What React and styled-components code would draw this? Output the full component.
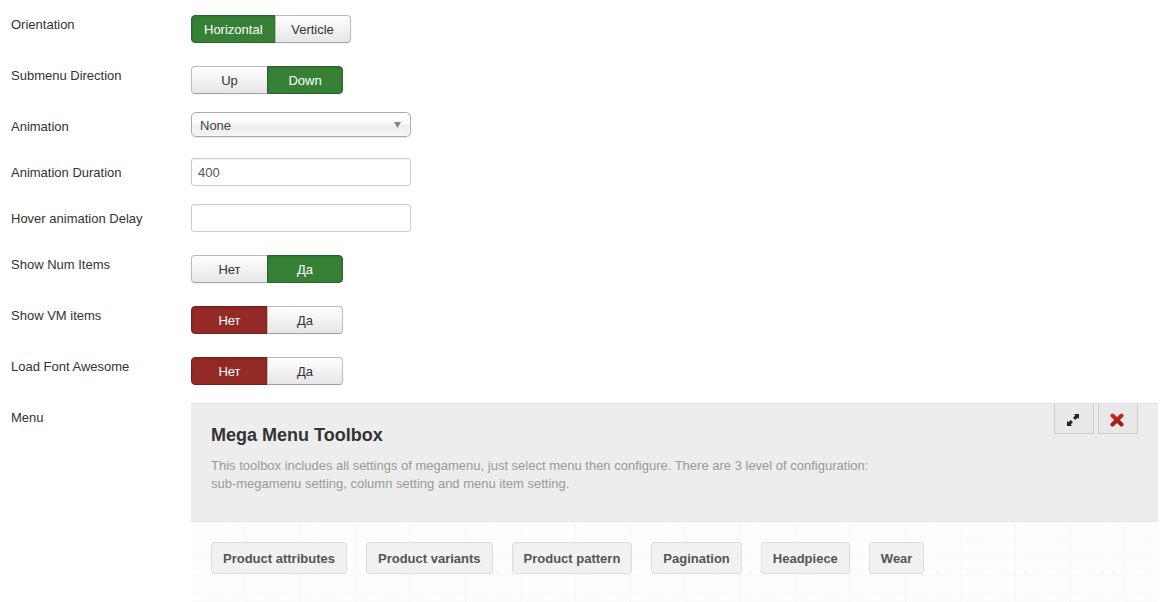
import React, { useState } from "react";
import styled, { createGlobalStyle } from "styled-components";

const GlobalStyle = createGlobalStyle`
    *, *::before, *::after {
        box-sizing: border-box;
    }
    body {
        background-color: #fff;
        color: #333;
        font-family: "Liberation Sans", Arial, sans-serif;
        font-size: 13px;
        line-height: 18px;
        margin: 0;
    }
    button, input, select {
        font: inherit;
        margin: 0;
    }
`

const Form = styled.form`
    display: flex;
    flex-direction: column;
    gap: 18px;
    padding: 10px 7px 0 11px;
`
const Row = styled.div`
    align-items: start;
    display: grid;
    grid-template-columns: 180px minmax(0, 1fr);
`
const RowLabel = styled.label`
    padding-top: 6px;
`
const Group = styled.div`
    display: flex;
    padding-top: 5px;
`
const colors = {
    green: { fill: "#378137", border: "#2b642b", shadow: "#2f702f" },
    red: { fill: "#942a25", border: "#74211d", shadow: "#842520" },
}
const Option = styled.label`
    background: ${({ $color }) => $color ? colors[$color].fill : "linear-gradient(#fff, #e6e6e6)"};
    border: 1px solid ${({ $color }) => $color ? colors[$color].border : "#bbb"};
    border-bottom-color: ${({ $color }) => $color ? colors[$color].border : "#a2a2a2"};
    box-shadow: ${({ $color }) => $color ? `inset 0 1px 3px ${colors[$color].shadow}` : "0 1px 2px rgba(0, 0, 0, 0.05)"};
    color: ${({ $color }) => $color ? "#fff" : "#333"};
    cursor: pointer;
    min-width: 77px;
    padding: 5px 12px 3px;
    text-align: center;
    &:first-child {
        border-radius: 4px 0 0 4px;
    }
    &:last-child {
        border-radius: 0 4px 4px 0;
        margin-left: -1px;
        min-width: 76px;
    }
    &:focus-within {
        outline: 2px solid #9cc3e8;
    }
`
const Radio = styled.input`
    appearance: none;
    display: inline;
    height: 0;
    width: 0;
`
const TextInput = styled.input`
    border: 1px solid #ccc;
    border-radius: 3px;
    box-shadow: inset 0 1px 1px rgba(0, 0, 0, 0.05);
    color: #555;
    height: 28px;
    max-width: 220px;
    padding: 4px 6px;
    width: 100%;
`
const SelectBox = styled.div`
    align-items: center;
    display: grid;
    height: 28px;
    max-width: 220px;
    padding-bottom: 3px;
`
const Select = styled.select`
    appearance: none;
    background: linear-gradient(#fff 20%, #f6f6f6 50%, #eee 52%, #f4f4f4 100%);
    border: 1px solid #aaa;
    border-radius: 5px;
    box-shadow: inset 0 0 3px #fff, 0 1px 1px rgba(0, 0, 0, 0.1);
    color: #444;
    grid-area: 1 / 1;
    height: 25px;
    padding: 2px 24px 0 8px;
    width: 100%;
`
const Caret = styled.svg`
    grid-area: 1 / 1;
    justify-self: end;
    margin-right: 10px;
    pointer-events: none;
`
const Toolbox = styled.section`
    background-color: #ededed;
    border-bottom: 1px solid #e6e6e6;
    border-top: 1px solid #e0e0e0;
    display: flex;
    justify-content: space-between;
    padding: 0 20px 28px;
`
const ToolboxText = styled.div`
    max-width: 680px;
    padding-top: 18px;
`
const Title = styled.h3`
    font-size: 18px;
    line-height: 27px;
    margin: 0 0 8px;
`
const Intro = styled.p`
    color: #999;
    margin: 0;
`
const Actions = styled.div`
    display: flex;
    flex: none;
    gap: 4px;
`
const IconButton = styled.button`
    align-items: center;
    background-color: #e8e8e8;
    border: 1px solid #ccc;
    border-top: 0;
    cursor: pointer;
    display: flex;
    height: 30px;
    justify-content: center;
    padding: 3px 2px 0 0;
    width: 40px;
`
const Canvas = styled.div`
    background-color: #fff;
    background-image:
        repeating-linear-gradient(90deg, transparent 0 54px, #f7f7f7 54px 55px),
        repeating-linear-gradient(transparent 0 17px, #f8f8f8 17px 18px),
        repeating-linear-gradient(90deg, transparent 0 8px, #fcfcfc 8px 11px),
        repeating-linear-gradient(transparent 0 5px, #fcfcfc 5px 8px);
    display: flex;
    flex-wrap: wrap;
    gap: 19px;
    padding: 20px 20px 28px;
`
const MenuItem = styled.button`
    background-color: #f1f1f1;
    border: 1px solid #ddd;
    border-radius: 3px;
    color: #555;
    cursor: pointer;
    font-weight: bold;
    padding: 7px 11px 5px;
`

const menuItems = ["Product attributes", "Product variants", "Product pattern", "Pagination", "Headpiece", "Wear"];

function Switch({ name, label, options, initial, tones = ["green", "green"] }) {
    const [selected, setSelected] = useState(initial);
    return (
        <Row role="radiogroup" aria-labelledby={`${name}-label`}>
            <RowLabel as="span" id={`${name}-label`}>{label}</RowLabel>
            <Group>
                {options.map((option, i) => (
                    <Option key={option} $color={selected === i ? tones[i] : null}>
                        <Radio type="radio" name={name} checked={selected === i} onChange={() => setSelected(i)}/>
                        {option}
                    </Option>
                ))}
            </Group>
        </Row>
    )
}

function YesNo(props) {
    return <Switch options={["Нет", "Да"]} tones={["red", "green"]} {...props}/>
}

function App() {
    return (
        <>
            <GlobalStyle/>
            <Form>
                <Switch name="orientation" label="Orientation" options={["Horizontal", "Verticle"]} initial={0}/>
                <Switch name="direction" label="Submenu Direction" options={["Up", "Down"]} initial={1}/>
                <Row>
                    <RowLabel htmlFor="animation">Animation</RowLabel>
                    <SelectBox>
                        <Select id="animation">
                            <option>None</option>
                        </Select>
                        <Caret width="7" height="6" viewBox="0 0 7 6" aria-hidden="true">
                            <path d="M0 0h7L3.5 6z" fill="#888"/>
                        </Caret>
                    </SelectBox>
                </Row>
                <Row>
                    <RowLabel htmlFor="duration">Animation Duration</RowLabel>
                    <TextInput id="duration" type="text" defaultValue="400"/>
                </Row>
                <Row>
                    <RowLabel htmlFor="delay">Hover animation Delay</RowLabel>
                    <TextInput id="delay" type="text"/>
                </Row>
                <YesNo name="num-items" label="Show Num Items" initial={1}/>
                <YesNo name="vm-items" label="Show VM items" initial={0}/>
                <YesNo name="font-awesome" label="Load Font Awesome" initial={0}/>
                <Row>
                    <RowLabel as="span">Menu</RowLabel>
                    <div>
                        <Toolbox>
                            <ToolboxText>
                                <Title>Mega Menu Toolbox</Title>
                                <Intro>
                                    This toolbox includes all settings of megamenu, just select menu then configure. There
                                    are 3 level of configuration: sub-megamenu setting, column setting and menu item setting.
                                </Intro>
                            </ToolboxText>
                            <Actions>
                                <IconButton type="button" aria-label="Expand">
                                    <svg width="14" height="14" viewBox="0 0 14 14">
                                        <path d="M8 1h5v5l-1.5-1.3-2.3 2.2-2.1-2.1 2.2-2.3zM6 13H1V8l1.5 1.300 2.300-2.200 2.100 2.100-2.200 2.300z" fill="#222"/>
                                    </svg>
                                </IconButton>
                                <IconButton type="button" aria-label="Close">
                                    <svg width="14" height="14" viewBox="0 0 14 14">
                                        <defs>
                                            <linearGradient id="cross" x1="0" y1="0" x2="0" y2="14" gradientUnits="userSpaceOnUse">
                                                <stop offset="0" stopColor="#cf2a1c"/>
                                                <stop offset="1" stopColor="#8e1c16"/>
                                            </linearGradient>
                                        </defs>
                                        <path d="M2.5 2.5l9 9M11.5 2.5l-9 9" stroke="url(#cross)" strokeWidth="4" strokeLinecap="round"/>
                                    </svg>
                                </IconButton>
                            </Actions>
                        </Toolbox>
                        <Canvas>
                            {menuItems.map(item => <MenuItem type="button" key={item}>{item}</MenuItem>)}
                        </Canvas>
                    </div>
                </Row>
            </Form>
        </>
    )
}

export default App;
